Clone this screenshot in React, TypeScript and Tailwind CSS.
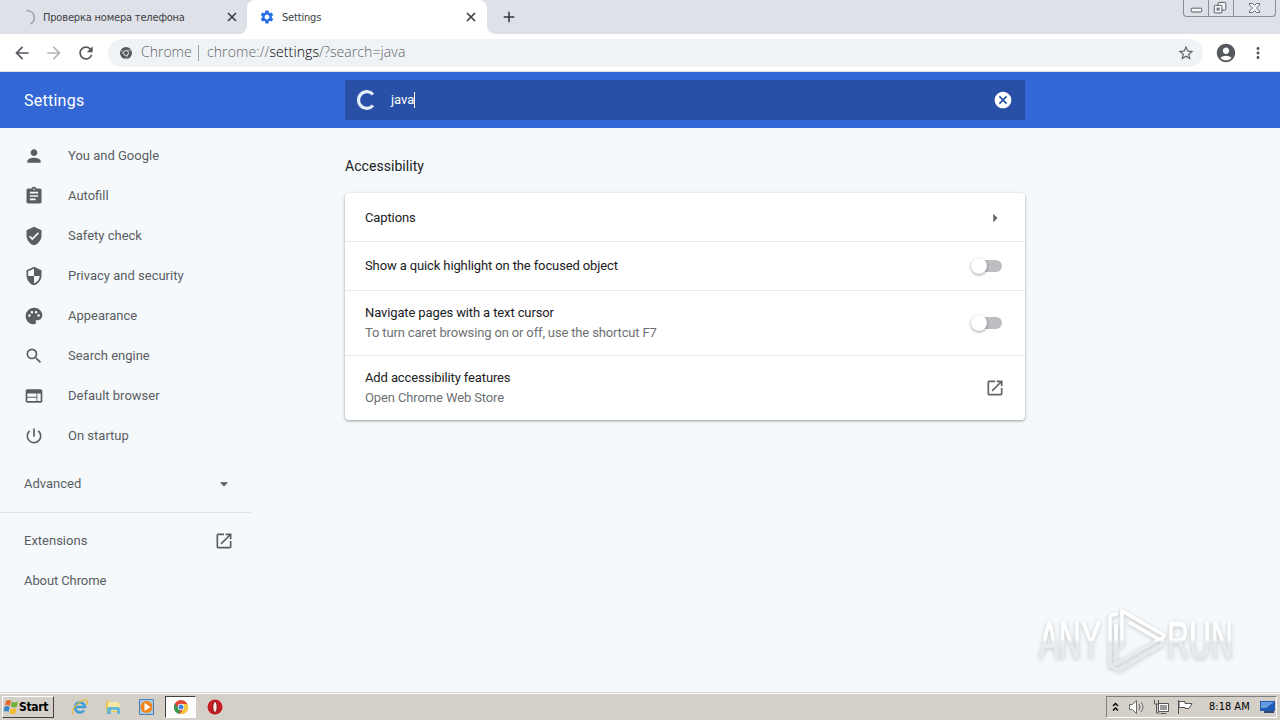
import React from 'react';
import {
  MdAccountCircle, MdAdd, MdArrowBack, MdArrowDropDown, MdArrowForward, MdArrowRight, MdAssignment,
  MdCancel, MdMoreVert, MdOpenInNew, MdPalette, MdPerson, MdPowerSettingsNew, MdRefresh,
  MdSearch, MdSecurity, MdSettings, MdStarBorder, MdVerifiedUser, MdWeb,
} from 'react-icons/md';

const menu = [
  { icon: MdPerson, label: 'You and Google' },
  { icon: MdAssignment, label: 'Autofill' },
  { icon: MdVerifiedUser, label: 'Safety check' },
  { icon: MdSecurity, label: 'Privacy and security' },
  { icon: MdPalette, label: 'Appearance' },
  { icon: MdSearch, label: 'Search engine' },
  { icon: MdWeb, label: 'Default browser' },
  { icon: MdPowerSettingsNew, label: 'On startup' },
];

const TabClose: React.FC = () => (
  <svg className="h-[14px] w-[14px]" viewBox="0 0 14 14" stroke="#3c4043" strokeWidth="1.700">
    <path d="m3 3 8 8M11 3l-8 8" />
  </svg>
);

const TabStrip: React.FC = () => (
  <div className="flex h-[34px] bg-[#dee1e8] font-['DejaVu_Sans_Condensed','Noto_Sans',sans-serif] text-[11px] text-[#3c4043]">
    <div className="flex w-[247px] items-center rounded-br-lg pl-[22px] pr-2">
      <svg className="h-4 w-4" viewBox="0 0 16 16" fill="none" stroke="#a0a4aa" strokeWidth="1.7">
        <path d="M4.5 1.8A7 7 0 0 1 8.5 15" />
      </svg>
      <span className="ml-[5px] flex-1 whitespace-nowrap pt-0.5 tracking-[-0.18px]">Проверка номера телефона</span>
      <TabClose />
    </div>
    <div className="relative flex w-60 items-center rounded-t-lg bg-white pl-3 pr-[9px]">
      <svg className="absolute -left-2 bottom-0 h-2 w-2" viewBox="0 0 8 8"><path d="M8 0v8H0a8 8 0 0 0 8-8" fill="#fff" /></svg>
      <svg className="absolute -right-2 bottom-0 h-2 w-2" viewBox="0 0 8 8"><path d="M0 0v8h8a8 8 0 0 1-8-8" fill="#fff" /></svg>
      <MdSettings size={16} className="text-[#2a6de8]" />
      <span className="ml-[7px] flex-1 pt-0.5 tracking-[-0.18px]">Settings</span>
      <TabClose />
    </div>
    <MdAdd size={18} className="ml-[13px] mt-2 text-[#30343c]" />
    <div className="ml-auto mr-[4px] flex h-[17px] w-[93px] rounded-b-[4px] border border-t-0 border-[#888c96]">
      <div className="w-[25px] border-r border-[#888c96]">
        <svg viewBox="0 0 25 16" fill="#f5f6f8" stroke="#555963"><rect x="7.5" y="8.5" width="11" height="4" rx="1" /></svg>
      </div>
      <div className="w-[25px] border-r border-[#888c96]">
        <svg viewBox="0 0 25 16" fill="#f5f6f8" stroke="#555963">
          <rect x="9.5" y="2.5" width="8" height="8" rx="1" />
          <rect x="5.5" y="5.5" width="8" height="8" rx="1" />
          <rect x="8.5" y="8.5" width="2" height="2" />
        </svg>
      </div>
      <svg className="w-[41px]" viewBox="0 0 41 16" fill="#f5f6f8" stroke="#666a73">
        <path d="M15.5 3.5h3l2 2 2-2h3v1.5L22.5 8l3 3v1.500h-3l-2-2-2 2h-3V11l3-3-3-3z" />
      </svg>
    </div>
  </div>
);

const Toolbar: React.FC = () => (
  <div className="flex h-[38px] items-center border-b border-[#dfe1e5] bg-white pl-3 text-[#55595e]">
    <MdArrowBack size={20} />
    <MdArrowForward size={20} className="ml-3 text-[#b3b5b8]" />
    <MdRefresh size={20} className="ml-3" />
    <div className="ml-3 flex h-7 w-[1095px] items-center rounded-full bg-[#f0f3f5] pl-3 pr-2 font-['Open_Sans','Noto_Sans',sans-serif] text-[14px] font-light text-[#5f6368]">
      <svg className="h-3 w-3" viewBox="0 0 12 12">
        <circle cx="6" cy="6" r="6" fill="#55595e" />
        <circle cx="6" cy="6" r="2.500" fill="none" stroke="#e8ebed" strokeWidth=".9" />
        <path d="M6 3.300h5.300M3.700 7.200 1.200 3M8.200 7.200 5.700 12" stroke="#d0d3d6" strokeWidth=".7" />
      </svg>
      <span className="ml-[9px] w-[49px] pb-0.5">Chrome</span>
      <span className="mx-2 h-4 w-px bg-[#9a9da2]" />
      <span className="flex-1 whitespace-nowrap pb-0.5 tracking-[0.1px]">chrome://<span className="text-black">settings</span>/?search=java</span>
      <MdStarBorder size={18} />
    </div>
    <MdAccountCircle size={22} className="ml-3" />
    <MdMoreVert size={18} className="ml-[12px]" />
  </div>
);

const Header: React.FC = () => (
  <header className="flex h-14 items-center bg-[#3367d6] text-white">
    <h1 className="w-[345px] pl-6 pt-0.5 text-[16px] tracking-[0.25px]">Settings</h1>
    <div className="flex h-10 w-[680px] items-center bg-[#2850a7] pl-[11px] pr-3">
      <svg className="h-5 w-5" viewBox="0 0 20 20" fill="none" stroke="#e6f0fc" strokeWidth="3.200">
        <path d="M17 4.500A8.300 8.300 0 1 0 17 15.500" />
      </svg>
      <span className="ml-[15px] text-[13px]">java</span>
      <span className="h-4 w-px bg-white" />
      <MdCancel size={20} className="ml-auto" />
    </div>
  </header>
);

const Sidebar: React.FC = () => (
  <nav className="w-[251px] pt-2 text-[13px] text-[#5a5d61]">
    {menu.map(({ icon: Icon, label }) => (
      <div key={label} className="flex h-10 items-center pl-6">
        <Icon size={20} />
        <span className="ml-6">{label}</span>
      </div>
    ))}
    <div className="mt-2 flex h-10 items-center justify-between pl-6 pr-[17px]">
      Advanced
      <MdArrowDropDown size={20} />
    </div>
    <div className="mb-2 mt-2 h-px bg-[#dfe3e6]" />
    <div className="flex h-10 items-center justify-between pl-6 pr-[17px]">
      Extensions
      <MdOpenInNew size={20} />
    </div>
    <div className="flex h-10 items-center pl-6 tracking-[-0.1px]">About Chrome</div>
  </nav>
);

const Toggle: React.FC = () => (
  <div className="relative h-3 w-[30px] rounded-full bg-[#bdbdc2]">
    <div className="absolute -left-[1px] -top-[2px] h-4 w-4 rounded-full bg-white shadow-[0_1px_3px_rgba(0,0,0,0.4)]" />
  </div>
);

const Results: React.FC = () => (
  <main className="ml-[94px] w-[680px] text-[13px] tracking-[-0.12px] text-[#202124]">
    <h2 className="h-[65px] pt-[27px] text-[14px] leading-[22px] tracking-[0.05px]">Accessibility</h2>
    <div className="divide-y divide-[#e8eaed] rounded bg-white shadow-[0_1px_2px_rgba(60,64,67,0.3),0_1px_3px_1px_rgba(60,64,67,0.15)]">
      <div className="flex h-[49px] items-center justify-between pl-5 pr-5 pt-px">
        Captions
        <MdArrowRight size={20} className="text-[#5f6368]" />
      </div>
      <div className="flex h-[49px] items-center justify-between pl-5 pr-[23px]">
        Show a quick highlight on the focused object
        <Toggle />
      </div>
      <div className="flex h-[65px] items-center justify-between pl-5 pr-[23px] leading-5">
        <div>
          Navigate pages with a text cursor
          <p className="tracking-[-0.15px] text-[#6d7175]">To turn caret browsing on or off, use the shortcut F7</p>
        </div>
        <Toggle />
      </div>
      <div className="flex h-16 items-center justify-between pl-5 pr-5 leading-5">
        <div>
          Add accessibility features
          <p className="text-[#6d7175]">Open Chrome Web Store</p>
        </div>
        <MdOpenInNew size={20} className="text-[#5f6368]" />
      </div>
    </div>
  </main>
);

const Watermark: React.FC = () => (
  <svg className="absolute bottom-[14px] right-0 h-[76px] w-[249px] drop-shadow-[0_1px_2px_rgba(0,0,0,0.2)]" viewBox="0 0 249 76">
    <defs>
      <linearGradient id="fade" x1="0" y1="0" x2="0" y2="76" gradientUnits="userSpaceOnUse">
        <stop offset=".5" stopColor="#fff" />
        <stop offset=".52" stopColor="#e9ebec" />
        <stop offset="1" stopColor="#e4e6e7" />
      </linearGradient>
    </defs>
    <g fill="url(#fade)" fontFamily="Liberation Sans Narrow, Liberation Sans, sans-serif" fontSize="51">
      <text x="8" y="56" textLength="62" lengthAdjust="spacingAndGlyphs" stroke="url(#fade)">ANY</text>
      <text x="136" y="56" textLength="66" lengthAdjust="spacingAndGlyphs" stroke="url(#fade)">RUN</text>
    </g>
    <g fill="none" stroke="url(#fade)" strokeWidth="3.500">
      <path d="M87 12h-3q-5 1-5 5v47l6-3V22" />
      <path d="M91 46V9l42 24q-1 4-4 5L98 20" />
      <path d="M80 64l8 4 42-25q4-4-1-6L85 62" />
    </g>
  </svg>
);

const Taskbar: React.FC = () => (
  <footer className="flex h-7 items-center border-t border-[#d4d0c8] bg-[#d4d0c8] pl-[2px] pt-px text-[11px] text-black shadow-[inset_0_1px_0_#fff] font-['DejaVu_Sans_Condensed',sans-serif]">
    <div className="flex h-[22px] w-[52px] items-center border border-b-[#404040] border-l-white border-r-[#404040] border-t-white text-[12px] font-bold tracking-[-0.3px]">
      <svg className="h-4 w-4" viewBox="0 0 16 16">
        <path d="M3 2q3-2 5 0L7 7Q4 5 2 7z" fill="#e56b2c" />
        <path d="M9 2.500q3 2 6 0l-1 5q-3 2-6 0z" fill="#70af35" />
        <path d="M1.500 8q3-2 5 0l-1 5q-3-2-5 0z" fill="#3484cf" />
        <path d="M7.500 9q3 2 6 0l-1 5q-3 2-6 0z" fill="#f3bb2c" />
      </svg>
      Start
    </div>
    <svg className="ml-[17px] h-[18px] w-[18px]" viewBox="0 0 18 18" fill="none">
      <path d="M13 12.500A5 5 0 1 1 14 9H5" stroke="#3b9ed9" strokeWidth="2.600" />
      <path d="M2 16C-1 12 10 1 15 2q3 1 0 5" stroke="#e3ba3d" strokeWidth="1.300" />
    </svg>
    <svg className="ml-4 h-[18px] w-[18px]" viewBox="0 0 18 18">
      <path d="M1 3h5l1 2h8v9H1z" fill="#e7c65b" /><path d="M3 4h9l3 2v7H3z" fill="#f7e7a2" />
      <path d="M2 16v-5q0-2 2-2h9q2 0 2 2v5h-3v-4H6v4z" fill="#63b8d5" />
    </svg>
    <svg className="ml-[15px] h-[18px] w-[18px]" viewBox="0 0 18 18">
      <path d="M1.500 1.500h14v15h-14z" fill="#a9cbe8" stroke="#4a82b8" />
      <circle cx="8.500" cy="9" r="6" fill="#f28418" /><path d="m6.500 5 6 4-6 4z" fill="#fff" />
    </svg>
    <div className="ml-[9px] flex h-[22px] w-[31px] items-center justify-center border border-b-white border-l-[#404040] border-r-white border-t-[#404040] bg-[#fcfcfb]">
      <svg className="h-[14px] w-[14px]" viewBox="0 0 14 14">
        <circle cx="7" cy="7" r="7" fill="#e04536" />
        <path d="M1 3.500 5.500 10 5.500 14A7 7 0 0 1 1 3.500" fill="#33994d" />
        <path d="M7 4h6.400A7 7 0 0 1 6 14l4-6z" fill="#f5c73c" />
        <circle cx="7" cy="7" r="3.200" fill="#fff" /><circle cx="7" cy="7" r="2.500" fill="#477fe0" />
      </svg>
    </div>
    <svg className="ml-[11px] h-4 w-4" viewBox="0 0 16 16">
      <circle cx="8" cy="8" r="7.500" fill="#c51c23" /><ellipse cx="8" cy="8" rx="2.200" ry="5.500" fill="#f9e9e9" stroke="#7d0e12" />
    </svg>
    <div className="ml-auto mr-[3px] flex h-[22px] w-[171px] items-center border border-b-white border-l-[#808080] border-r-white border-t-[#808080] pl-[5px]">
      <svg className="h-[10px] w-[7px]" viewBox="0 0 7 10" fill="none" stroke="#000" strokeWidth="1.300"><path d="m1 4 2.500-2.500L6 4M1 8.500 3.500 6 6 8.500" /></svg>
      <svg className="ml-[10px] h-4 w-4" viewBox="0 0 16 16" fill="#fff" stroke="#6b6b6b"><path d="M.5 5.500h3l4-4v13l-4-4h-3z" /><path d="M10 5q2 3 0 6M12 3q4 5 0 10" fill="none" /></svg>
      <svg className="ml-2 h-4 w-4" viewBox="0 0 16 16" fill="#fff" stroke="#555"><path d="M5.500 4.500h10v8h-10zM7.500 14.500h6" /><path d="M7 6h7v5H7z" fill="#999" stroke="none" /><path d="M1.500 1v4h4V1M3.500 5v9h3" fill="none" /></svg>
      <svg className="ml-2 h-4 w-4" viewBox="0 0 16 16" fill="#fff" stroke="#555"><path d="M1.500 1v14M2 2.500h6v2h7l-3 5H8v-1H2z" /></svg>
      <span className="ml-[16px] whitespace-nowrap pt-px">8:18 AM</span>
      <svg className="ml-auto h-[14px] w-4" viewBox="0 0 16 14"><path d="M0 1h15v10H0z" fill="#215cb4" /><path d="M1 2h13L6 8H1z" fill="#659be0" /><path d="M4 11h10v2H4z" fill="#334b73" /></svg>
    </div>
  </footer>
);

const App: React.FC = () => {
  return (
    <div className="flex h-[720px] w-[1280px] flex-col overflow-hidden bg-[#f5f9fc] font-[Roboto,sans-serif]">
      <TabStrip />
      <Toolbar />
      <Header />
      <div className="relative flex flex-1">
        <Sidebar />
        <Results />
        <Watermark />
      </div>
      <Taskbar />
    </div>
  );
};

export default App;
